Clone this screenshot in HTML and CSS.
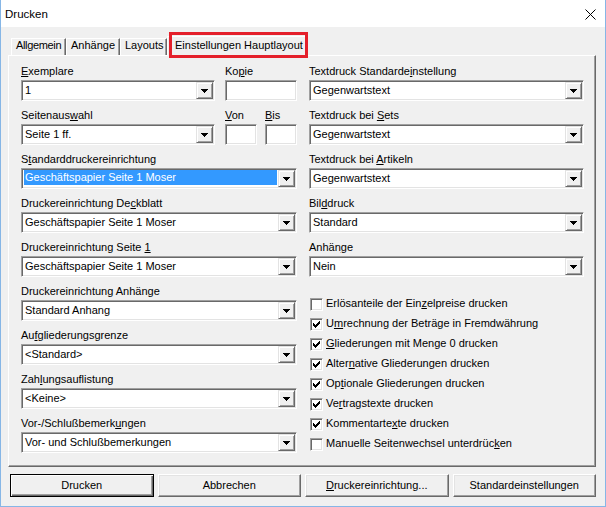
FILE: index.html
```html
<!DOCTYPE html>
<html>
<head>
<meta charset="utf-8">
<title>Drucken</title>
<link rel="stylesheet" href="styles.css">
</head>
<body>
<div class="window">
  <div class="titlebar">
    <span class="title">Drucken</span>
    <svg class="close" width="11" height="11" viewBox="0 0 11 11"><path d="M0.5 0.5L10.5 10.5M10.5 0.5L0.5 10.5" stroke="#000" stroke-width="1" fill="none"/></svg>
  </div>
  <div class="client">
    <div class="tabs">
      <div class="tab t1">Allgemein</div>
      <div class="tab t2">Anhänge</div>
      <div class="tab t3">Layouts</div>
      <div class="tab active">Einstellungen Hauptlayout<span class="mark"></span></div>
    </div>
    <div class="panel">
      <div class="col">
        <div class="pair">
          <div class="field">
            <div class="lbl"><u>E</u>xemplare</div>
            <div class="combo"><span class="val">1</span><span class="drop"><svg width="7" height="4" viewBox="0 0 7 4"><path d="M0 0h7v1h-1v1h-1v1h-1v1h-1v-1h-1v-1h-1v-1h-1z"/></svg></span></div>
          </div>
          <div class="field">
            <div class="lbl">Ko<u>p</u>ie</div>
            <div class="edit"></div>
          </div>
        </div>
        <div class="pair">
          <div class="field">
            <div class="lbl">Seitenaus<u>w</u>ahl</div>
            <div class="combo"><span class="val">Seite 1 ff.</span><span class="drop"><svg width="7" height="4" viewBox="0 0 7 4"><path d="M0 0h7v1h-1v1h-1v1h-1v1h-1v-1h-1v-1h-1v-1h-1z"/></svg></span></div>
          </div>
          <div class="vb">
            <div class="field">
              <div class="lbl"><u>V</u>on</div>
              <div class="edit"></div>
            </div>
            <div class="field">
              <div class="lbl"><u>B</u>is</div>
              <div class="edit"></div>
            </div>
          </div>
        </div>
        <div class="field">
          <div class="lbl">S<u>t</u>andarddruckereinrichtung</div>
          <div class="combo"><span class="val sel">Geschäftspapier Seite 1 Moser</span><span class="drop"><svg width="7" height="4" viewBox="0 0 7 4"><path d="M0 0h7v1h-1v1h-1v1h-1v1h-1v-1h-1v-1h-1v-1h-1z"/></svg></span></div>
        </div>
        <div class="field">
          <div class="lbl">Druckereinrichtung De<u>c</u>kblatt</div>
          <div class="combo"><span class="val">Geschäftspapier Seite 1 Moser</span><span class="drop"><svg width="7" height="4" viewBox="0 0 7 4"><path d="M0 0h7v1h-1v1h-1v1h-1v1h-1v-1h-1v-1h-1v-1h-1z"/></svg></span></div>
        </div>
        <div class="field">
          <div class="lbl">Druckereinrichtung Seite <u>1</u></div>
          <div class="combo"><span class="val">Geschäftspapier Seite 1 Moser</span><span class="drop"><svg width="7" height="4" viewBox="0 0 7 4"><path d="M0 0h7v1h-1v1h-1v1h-1v1h-1v-1h-1v-1h-1v-1h-1z"/></svg></span></div>
        </div>
        <div class="field">
          <div class="lbl">Druckereinrichtung Anhänge</div>
          <div class="combo"><span class="val">Standard Anhang</span><span class="drop"><svg width="7" height="4" viewBox="0 0 7 4"><path d="M0 0h7v1h-1v1h-1v1h-1v1h-1v-1h-1v-1h-1v-1h-1z"/></svg></span></div>
        </div>
        <div class="field">
          <div class="lbl">Au<u>f</u>gliederungsgrenze</div>
          <div class="combo"><span class="val">&lt;Standard&gt;</span><span class="drop"><svg width="7" height="4" viewBox="0 0 7 4"><path d="M0 0h7v1h-1v1h-1v1h-1v1h-1v-1h-1v-1h-1v-1h-1z"/></svg></span></div>
        </div>
        <div class="field">
          <div class="lbl">Zah<u>l</u>ungsauflistung</div>
          <div class="combo"><span class="val">&lt;Keine&gt;</span><span class="drop"><svg width="7" height="4" viewBox="0 0 7 4"><path d="M0 0h7v1h-1v1h-1v1h-1v1h-1v-1h-1v-1h-1v-1h-1z"/></svg></span></div>
        </div>
        <div class="field">
          <div class="lbl">Vor-/Schlußbemerk<u>u</u>ngen</div>
          <div class="combo"><span class="val">Vor- und Schlußbemerkungen</span><span class="drop"><svg width="7" height="4" viewBox="0 0 7 4"><path d="M0 0h7v1h-1v1h-1v1h-1v1h-1v-1h-1v-1h-1v-1h-1z"/></svg></span></div>
        </div>
      </div>
      <div class="col">
        <div class="field">
          <div class="lbl">Textdruck Standarde<u>i</u>nstellung</div>
          <div class="combo"><span class="val">Gegenwartstext</span><span class="drop"><svg width="7" height="4" viewBox="0 0 7 4"><path d="M0 0h7v1h-1v1h-1v1h-1v1h-1v-1h-1v-1h-1v-1h-1z"/></svg></span></div>
        </div>
        <div class="field">
          <div class="lbl">Textdruck bei <u>S</u>ets</div>
          <div class="combo"><span class="val">Gegenwartstext</span><span class="drop"><svg width="7" height="4" viewBox="0 0 7 4"><path d="M0 0h7v1h-1v1h-1v1h-1v1h-1v-1h-1v-1h-1v-1h-1z"/></svg></span></div>
        </div>
        <div class="field">
          <div class="lbl">Textdruck bei <u>A</u>rtikeln</div>
          <div class="combo"><span class="val">Gegenwartstext</span><span class="drop"><svg width="7" height="4" viewBox="0 0 7 4"><path d="M0 0h7v1h-1v1h-1v1h-1v1h-1v-1h-1v-1h-1v-1h-1z"/></svg></span></div>
        </div>
        <div class="field">
          <div class="lbl">Bil<u>d</u>druck</div>
          <div class="combo"><span class="val">Standard</span><span class="drop"><svg width="7" height="4" viewBox="0 0 7 4"><path d="M0 0h7v1h-1v1h-1v1h-1v1h-1v-1h-1v-1h-1v-1h-1z"/></svg></span></div>
        </div>
        <div class="field">
          <div class="lbl">Anhän<u>g</u>e</div>
          <div class="combo"><span class="val">Nein</span><span class="drop"><svg width="7" height="4" viewBox="0 0 7 4"><path d="M0 0h7v1h-1v1h-1v1h-1v1h-1v-1h-1v-1h-1v-1h-1z"/></svg></span></div>
        </div>
        <div class="checks">
          <div class="chk"><span class="box"></span><span class="txt">Erlösanteile der Ein<u>z</u>elpreise drucken</span></div>
          <div class="chk"><span class="box on"><svg width="7" height="7" viewBox="0 0 7 7"><path d="M6 0h1v1h-1zM5 1h2v1h-2zM0 2h1v1h-1zM4 2h3v1h-3zM0 3h2v1h-2zM3 3h3v1h-3zM0 4h5v1h-5zM1 5h3v1h-3zM2 6h1v1h-1z"/></svg></span><span class="txt">U<u>m</u>rechnung der Beträge in Fremdwährung</span></div>
          <div class="chk"><span class="box on"><svg width="7" height="7" viewBox="0 0 7 7"><path d="M6 0h1v1h-1zM5 1h2v1h-2zM0 2h1v1h-1zM4 2h3v1h-3zM0 3h2v1h-2zM3 3h3v1h-3zM0 4h5v1h-5zM1 5h3v1h-3zM2 6h1v1h-1z"/></svg></span><span class="txt"><u>G</u>liederungen mit Menge 0 drucken</span></div>
          <div class="chk"><span class="box on"><svg width="7" height="7" viewBox="0 0 7 7"><path d="M6 0h1v1h-1zM5 1h2v1h-2zM0 2h1v1h-1zM4 2h3v1h-3zM0 3h2v1h-2zM3 3h3v1h-3zM0 4h5v1h-5zM1 5h3v1h-3zM2 6h1v1h-1z"/></svg></span><span class="txt">Alter<u>n</u>ative Gliederungen drucken</span></div>
          <div class="chk"><span class="box on"><svg width="7" height="7" viewBox="0 0 7 7"><path d="M6 0h1v1h-1zM5 1h2v1h-2zM0 2h1v1h-1zM4 2h3v1h-3zM0 3h2v1h-2zM3 3h3v1h-3zM0 4h5v1h-5zM1 5h3v1h-3zM2 6h1v1h-1z"/></svg></span><span class="txt">Op<u>t</u>ionale Gliederungen drucken</span></div>
          <div class="chk"><span class="box on"><svg width="7" height="7" viewBox="0 0 7 7"><path d="M6 0h1v1h-1zM5 1h2v1h-2zM0 2h1v1h-1zM4 2h3v1h-3zM0 3h2v1h-2zM3 3h3v1h-3zM0 4h5v1h-5zM1 5h3v1h-3zM2 6h1v1h-1z"/></svg></span><span class="txt">Ve<u>r</u>tragstexte drucken</span></div>
          <div class="chk"><span class="box on"><svg width="7" height="7" viewBox="0 0 7 7"><path d="M6 0h1v1h-1zM5 1h2v1h-2zM0 2h1v1h-1zM4 2h3v1h-3zM0 3h2v1h-2zM3 3h3v1h-3zM0 4h5v1h-5zM1 5h3v1h-3zM2 6h1v1h-1z"/></svg></span><span class="txt">Kommentarte<u>x</u>te drucken</span></div>
          <div class="chk"><span class="box"></span><span class="txt">Manuelle Seitenwechsel unterdrüc<u>k</u>en</span></div>
        </div>
      </div>
    </div>
    <div class="buttons">
      <div class="btn default">Drucken</div>
      <div class="btn">Abbrechen</div>
      <div class="btn"><u>D</u>ruckereinrichtung...</div>
      <div class="btn">Standardeinstellungen</div>
    </div>
  </div>
</div>
</body>
</html>
```
FILE: styles.css
```css
* { box-sizing: border-box; }
html, body { margin: 0; padding: 0; background: #f0f0f0; }
body {
  font-family: "Liberation Sans", Arial, sans-serif;
  font-size: 11px;
  color: #000;
}
u { text-decoration: underline; text-underline-offset: 1px; }

.window {
  width: 606px;
  height: 507px;
  border: 1px solid #86b6e6;
  border-top: none;
  display: flex;
  flex-direction: column;
  background: #f0f0f0;
}

.titlebar {
  height: 27px;
  flex: none;
  background: #fff;
  display: flex;
  align-items: center;
  justify-content: space-between;
  padding: 0 9px 0 4px;
}
.title { font-size: 11.5px; line-height: 14px; padding-top: 1px; }
.close { display: block; margin-top: 1px; }

.client {
  flex: 1;
  padding: 9px 9px 0 7px;
  display: flex;
  flex-direction: column;
}

.tabs {
  height: 19px;
  flex: none;
  display: flex;
  align-items: flex-end;
  padding-left: 3px;
  position: relative;
  z-index: 1;
}
.tab {
  height: 17px;
  line-height: 13px;
  border-top: 1px solid #fff;
  border-left: 1px solid #fff;
  border-right: 1px solid #696969;
  box-shadow: inset -1px 0 #a0a0a0;
  padding-left: 4px;
  white-space: nowrap;
  overflow: hidden;
  background: #f0f0f0;
}
.t1 { width: 55px; padding-left: 4px; letter-spacing: -0.35px; }
.t2 { width: 54px; padding-left: 4px; }
.t3 { width: 47px; }
.tab.active {
  position: relative;
  overflow: visible;
  height: 20px;
  margin-bottom: -1px;
  width: 141px;
  padding-top: 2px;
  padding-left: 7px;
}
.mark {
  position: absolute;
  left: 1px;
  top: -5px;
  width: 139px;
  height: 26px;
  border: 3px solid #e4202b;
}

.panel {
  height: 412px;
  flex: none;
  border-top: 1px solid #fff;
  border-left: 1px solid #fff;
  border-right: 1px solid #696969;
  border-bottom: 1px solid #696969;
  box-shadow: inset -1px -1px #a0a0a0;
  padding: 9px 0 0 12px;
  display: grid;
  grid-template-columns: 276px 275px;
  column-gap: 12px;
  align-content: start;
}

.field { margin-bottom: 8px; }
.lbl {
  height: 13px;
  line-height: 13px;
  margin-bottom: 2px;
  white-space: nowrap;
}
.combo, .edit {
  height: 21px;
  background: #fff;
  border: 1px solid;
  border-color: #a0a0a0 #fff #fff #a0a0a0;
  box-shadow: inset 1px 1px #696969, inset -1px -1px #e3e3e3;
  padding: 1px;
}
.combo { display: flex; }
.val {
  flex: 1;
  line-height: 17px;
  padding-left: 2px;
  white-space: nowrap;
  overflow: hidden;
}
.val.sel {
  background: #3399ff;
  color: #fff;
  margin: 0 1px 2px 1px;
  padding-left: 1px;
  line-height: 15px;
}
.drop {
  width: 17px;
  height: 17px;
  flex: none;
  background: #f0f0f0;
  border: 1px solid;
  border-color: #e3e3e3 #696969 #696969 #e3e3e3;
  box-shadow: inset 1px 1px #fff, inset -1px -1px #a0a0a0;
  display: flex;
  align-items: center;
  justify-content: center;
}
.drop svg { display: block; }

.pair {
  display: grid;
  grid-template-columns: 194px 72px;
  column-gap: 10px;
}
.vb {
  display: grid;
  grid-template-columns: 32px 32px;
  column-gap: 8px;
}

.checks { padding-top: 10px; }
.chk { height: 20px; display: flex; padding-left: 1px; }
.box {
  width: 13px;
  height: 13px;
  flex: none;
  margin-top: 3px;
  background: #fff;
  border: 1px solid;
  border-color: #a0a0a0 #fff #fff #a0a0a0;
  box-shadow: inset 1px 1px #696969, inset -1px -1px #e3e3e3;
  padding: 2px;
}
.box svg { display: block; }
.txt { margin-left: 3px; line-height: 17px; white-space: nowrap; }

.buttons {
  display: flex;
  gap: 4px;
  margin: 7px 0 0 2px;
  height: 23px;
  flex: none;
}
.btn {
  flex: 1;
  text-align: center;
  line-height: 21px;
  background: #f0f0f0;
  border: 1px solid;
  border-color: #fff #696969 #696969 #fff;
  box-shadow: inset -1px -1px #a0a0a0, inset 1px 1px #e3e3e3;
  white-space: nowrap;
}
.btn.default {
  border: 1px solid #000;
  box-shadow: inset 1px 1px #fff, inset -1px -1px #696969, inset -2px -2px #a0a0a0;
}
```
